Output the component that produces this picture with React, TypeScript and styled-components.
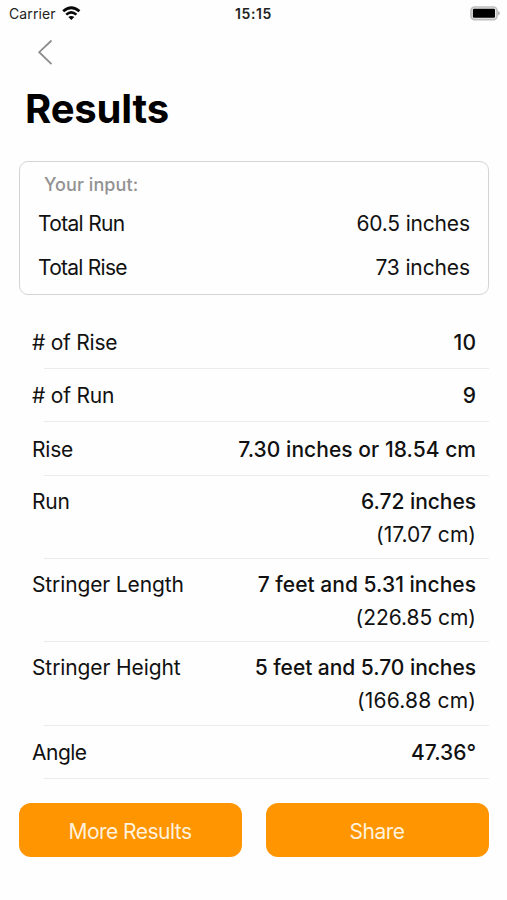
import React from "react";
import styled, { createGlobalStyle } from "styled-components";

const GlobalStyle = createGlobalStyle`
  * { box-sizing: border-box; }
  body { margin: 0; background: #fefefe; }
`;

const Screen = styled.main`
  width: 507px;
  height: 900px;
  overflow: hidden;
  display: flex;
  flex-direction: column;
  background: #fefefe;
  color: #111;
  font-family: Inter, "Liberation Sans", sans-serif;
  font-size: 21px;
`;

const StatusBar = styled.header`
  display: grid;
  grid-template-columns: 1fr auto 1fr;
  align-items: center;
  height: 27px;
  padding: 0 7px 0 9px;
  font-size: 14px;
`;

const Carrier = styled.div`
  display: flex;
  align-items: center;
  gap: 6px;
  letter-spacing: 0.12px;
  color: #222;
`;

const Clock = styled.time`
  font-weight: 600;
  letter-spacing: 0.65px;
  margin-right: 2px;
  color: #222;
`;

const BatterySlot = styled.div`
  display: flex;
  justify-content: flex-end;
`;

const BackButton = styled.button`
  display: flex;
  width: 24px;
  height: 28px;
  margin: 11px 0 0 33px;
  padding: 0;
  border: 0;
  background: none;
`;

const Title = styled.h1`
  margin: 19px 0 0 25px;
  font-size: 40px;
  line-height: 48px;
  font-weight: 700;
  letter-spacing: -0.15px;
  color: #000;
`;

const InputCard = styled.section`
  height: 134px;
  margin: 28px 18px 0 19px;
  padding: 10px 18px 0;
  border: 1px solid #d4d4d4;
  border-radius: 9px;
`;

const CardHeading = styled.h2`
  margin: 0 0 0 6px;
  font-size: 18px;
  line-height: 26px;
  font-weight: 500;
  letter-spacing: 0.08px;
  color: #929292;
`;

const InputRow = styled.div`
  display: flex;
  justify-content: space-between;
  height: 44px;
  line-height: 52px;
`;

const ResultsList = styled.section`
  margin-top: 20px;
`;

const ResultRow = styled.div<{ $double: boolean }>`
  display: flex;
  justify-content: space-between;
  height: ${(p) => (p.$double ? 82.35 : 52.5)}px;
  padding: ${(p) => (p.$double ? "9px" : "11.5px")} 31px 0 32px;
  line-height: ${(p) => (p.$double ? 33 : 32)}px;
`;

const Divider = styled.hr`
  height: 1px;
  margin: 0 18px 0 44px;
  border: 0;
  background: #ebebeb;
`;

const Label = styled.span<{ $tracking: number }>`
  letter-spacing: ${(p) => p.$tracking}px;
`;

const Values = styled.div`
  display: flex;
  flex-direction: column;
  align-items: flex-end;
`;

const Value = styled.span<{ $tracking: number; $strong?: boolean }>`
  font-weight: ${(p) => (p.$strong ? 500 : 400)};
  letter-spacing: ${(p) => p.$tracking}px;
  margin-right: ${(p) => -p.$tracking}px;
`;

const Actions = styled.footer`
  display: grid;
  grid-template-columns: 1fr 1fr;
  gap: 24px;
  margin: 24px 18px 0 19px;
`;

const ActionButton = styled.button`
  height: 54px;
  padding: 2px 1px 0 0;
  border: 0;
  border-radius: 12px;
  background: #ff9500;
  color: #fff1dc;
  font: inherit;
  letter-spacing: -0.53px;
`;

type Result = {
  label: string;
  tracking: number;
  value: string;
  valueTracking: number;
  metric?: string;
  metricTracking?: number;
};

const inputs = [
  { label: "Total Run", tracking: -0.68, value: "60.5 inches", valueTracking: -0.18 },
  { label: "Total Rise", tracking: -0.74, value: "73 inches", valueTracking: -0.13 },
];

const results: Result[] = [
  { label: "# of Rise", tracking: -0.23, value: "10", valueTracking: 0.3 },
  { label: "# of Run", tracking: -0.2, value: "9", valueTracking: 0 },
  { label: "Rise", tracking: -0.2, value: "7.30 inches or 18.54 cm", valueTracking: 0.05 },
  { label: "Run", tracking: -0.25, value: "6.72 inches", valueTracking: -0.05, metric: "(17.07 cm)", metricTracking: 0.04 },
  { label: "Stringer Length", tracking: -0.13, value: "7 feet and 5.31 inches", valueTracking: 0.03, metric: "(226.85 cm)", metricTracking: -0.04 },
  { label: "Stringer Height", tracking: -0.1, value: "5 feet and 5.70 inches", valueTracking: -0.04, metric: "(166.88 cm)", metricTracking: 0.2 },
  { label: "Angle", tracking: -0.5, value: "47.36°", valueTracking: 0 },
];

const WifiIcon = () => (
  <svg width="19" height="15" viewBox="0 0 19 15" fill="none" stroke="#080808" aria-hidden="true">
    <path d="M1.2 5.3Q9.3-1.9 17.4 5.3" strokeWidth="2.8" />
    <path d="M4.2 8.6Q9.3 4.1 14.4 8.6" strokeWidth="2.5" />
    <path d="M9.3 14 6.3 11Q9.3 8.8 12.3 11Z" fill="#080808" stroke="none" />
  </svg>
);

const BatteryIcon = () => (
  <svg width="30" height="15" viewBox="0 0 30 15" aria-hidden="true">
    <rect x="1" y="1" width="26" height="12.6" rx="3.6" fill="#e8e8e8" stroke="#bebebe" strokeWidth="1.7" />
    <rect x="2.9" y="2.8" width="22.1" height="9" rx="1.2" fill="#000" />
    <path d="M28 5.1Q29.8 5.6 29.8 7.3T28 9.5Z" fill="#b5b5b5" />
  </svg>
);

export default function App() {
  return (
    <>
      <GlobalStyle />
      <Screen>
        <StatusBar>
          <Carrier>
            Carrier
            <WifiIcon />
          </Carrier>
          <Clock>15:15</Clock>
          <BatterySlot>
            <BatteryIcon />
          </BatterySlot>
        </StatusBar>
        <BackButton aria-label="Back">
          <svg width="24" height="28" viewBox="0 0 24 28" fill="none" stroke="#8c8c8c" strokeWidth="1.8">
            <path d="M18.5 2.5 6.2 14.2 18.5 26.2" />
          </svg>
        </BackButton>
        <Title>Results</Title>
        <InputCard>
          <CardHeading>Your input:</CardHeading>
          {inputs.map((row) => (
            <InputRow key={row.label}>
              <Label $tracking={row.tracking}>{row.label}</Label>
              <Value $tracking={row.valueTracking}>{row.value}</Value>
            </InputRow>
          ))}
        </InputCard>
        <ResultsList>
          {results.map((row) => (
            <React.Fragment key={row.label}>
              <ResultRow $double={row.metric !== undefined}>
                <Label $tracking={row.tracking}>{row.label}</Label>
                <Values>
                  <Value $strong $tracking={row.valueTracking}>{row.value}</Value>
                  {row.metric && <Value $tracking={row.metricTracking ?? 0}>{row.metric}</Value>}
                </Values>
              </ResultRow>
              <Divider />
            </React.Fragment>
          ))}
        </ResultsList>
        <Actions>
          <ActionButton>More Results</ActionButton>
          <ActionButton>Share</ActionButton>
        </Actions>
      </Screen>
    </>
  );
}
